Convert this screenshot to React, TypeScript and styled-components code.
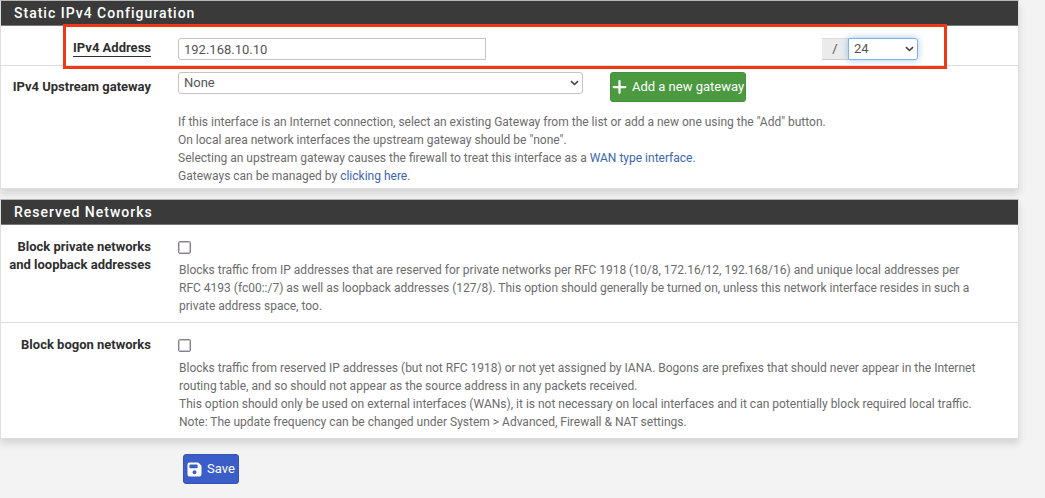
import React from "react";
import styled, { createGlobalStyle, css } from "styled-components";

const GlobalStyle = createGlobalStyle`
  *, *::before, *::after { box-sizing: border-box; }
  html { background: #f3f3f3; }
  body {
    margin: 0;
    background: #f3f3f3;
    color: #2f2f2f;
    font-family: Roboto, "Liberation Sans", sans-serif;
    font-size: 12px;
    line-height: 18px;
  }
`;

const Page = styled.form`
  margin-right: 26px;
`;

const Panel = styled.section`
  margin-bottom: 10px;
  background: #fff;
  border: 1px solid #dedede;
  border-top-color: #b5b5b5;
  box-shadow: 0 5px 7px rgba(0, 0, 0, 0.12);
`;

const PanelHeading = styled.h2`
  margin: 0;
  padding: 3px 13px;
  background: #3a3a3a;
  border-bottom: 1px solid #777;
  color: #fff;
  font-size: 14px;
  font-weight: 500;
  line-height: 18px;
  letter-spacing: 1px;
`;

const Row = styled.div<{ $pad?: string }>`
  position: relative;
  display: grid;
  grid-template-columns: 150px minmax(0, 1fr);
  column-gap: 27px;
  padding: ${(p) => p.$pad ?? "12px 8px 7px 0"};

  & + & { border-top: 1px solid #dedede; }
`;

const Label = styled.label`
  justify-self: end;
  align-self: start;
  padding-top: 1px;
  text-align: right;
  font-size: 13px;
  font-weight: 700;
`;

const RequiredMark = styled.span`
  display: block;
  margin-top: 1px;
  border-bottom: 1px solid #2f2f2f;
  line-height: 16px;
`;

const GatewayLabelText = styled.span`
  display: block;
  padding-top: 5px;
`;

const control = css`
  width: 100%;
  height: 22px;
  margin: 0;
  padding: 0 5px;
  background: #fff;
  border: 1px solid #c4c4c4;
  border-radius: 3px;
  color: #555;
  font: inherit;
  font-size: 13px;
`;

const AddressFields = styled.div`
  display: grid;
  grid-template-columns: minmax(0, 308fr) minmax(0, 336fr) 96px minmax(0, 92fr);
`;

const TextInput = styled.input`
  ${control}
  border-radius: 3px 0 0 3px;
`;

const MaskGroup = styled.div`
  grid-column: 3;
  display: grid;
  grid-template-columns: 26px 1fr;
`;

const Addon = styled.span`
  background: #ebebeb;
  border-top: 1px solid #ddd;
  border-bottom: 1px solid #ccc;
  color: #555;
  font-size: 13px;
  line-height: 20px;
  text-align: center;
`;

const SelectWrap = styled.div`
  position: relative;
  height: 22px;

  svg {
    position: absolute;
    right: 4px;
    top: 7px;
    pointer-events: none;
  }
`;

const SelectBox = styled.select<{ $active?: boolean }>`
  ${control}
  display: block;
  appearance: none;
  outline: none;
  ${(p) => p.$active && css`
    border-color: #84aee8;
    border-radius: 0 3px 3px 0;
    box-shadow: 0 0 7px rgba(102, 160, 233, 0.6);
  `}
`;

const Highlight = styled.div`
  position: absolute;
  z-index: 1;
  top: -2px;
  bottom: -4px;
  left: 62px;
  right: 71px;
  border: 3px solid #ee3917;
  pointer-events: none;
`;

const GatewayFields = styled.div`
  display: grid;
  grid-template-columns: minmax(0, 405fr) 136px minmax(0, 237fr);
  column-gap: 27px;
  margin-bottom: 11px;
`;

const Button = styled.button<{ $tone: "success" | "primary" }>`
  display: inline-flex;
  align-items: center;
  justify-content: center;
  gap: 5px;
  height: 30px;
  padding: 0 3px;
  background: ${(p) => (p.$tone === "success" ? "#4b9a40" : "#3a5dc8")};
  border: 1px solid ${(p) => (p.$tone === "success" ? "#45913b" : "#3454b8")};
  border-radius: 3px;
  color: #fff;
  font: inherit;
  font-size: 13px;
  white-space: nowrap;

  svg { flex: none; }
`;

const Help = styled.p`
  margin: 0;
  color: #6c6c6c;
`;

const Link = styled.a`
  color: #3a66b0;
  text-decoration: none;
`;

const CheckBox = styled.input`
  display: block;
  appearance: none;
  width: 13px;
  height: 13px;
  margin: 4px 0 7px;
  background: #fff;
  border: 1px solid #858091;
  border-radius: 2px;
  box-shadow: inset 0 0 0 1px #c9c6d0;
`;

const CheckHelp = styled(Help)`
  padding: 0 31px 0 1px;
`;

const Actions = styled.div`
  padding: 5px 0 14px 183px;
`;

const Chevron = () => (
  <svg width="9" height="8" viewBox="0 0 9 8" fill="none" stroke="#444" strokeWidth="1.6" aria-hidden="true">
    <path d="M1 2.2 4.5 5.5 8 2.2" />
  </svg>
);

const PlusIcon = () => (
  <svg width="15" height="16" viewBox="0 0 16 16" stroke="#fff" strokeWidth="2.4" strokeLinecap="round" aria-hidden="true">
    <path d="M8 1.8v12.4M1.8 8h12.4" />
  </svg>
);

const SaveIcon = () => (
  <svg width="15" height="16" viewBox="0 0 15 16" aria-hidden="true">
    <path
      fill="#fff"
      fillRule="evenodd"
      d="M2.2 1.5h8.6q.6 0 1 .4l2.3 2.3q.4.4.4 1v8.3q0 2-2 2H2.5q-2 0-2-2V3.5q0-2 1.7-2ZM3.1 3.6q-.7 0-.7.7v2.3q0 .7.7.7h6.8q.7 0 .7-.7V4.3q0-.7-.7-.7ZM7.5 9.3a2 2 0 1 0 0 4 2 2 0 0 0 0-4Z"
    />
  </svg>
);

export default function App() {
  return (
    <>
      <GlobalStyle />
      <Page onSubmit={(e) => e.preventDefault()}>
        <Panel>
          <PanelHeading>Static IPv4 Configuration</PanelHeading>
          <Row $pad="12px 8px 5px 0">
            <Label htmlFor="address">
              <RequiredMark>IPv4 Address</RequiredMark>
            </Label>
            <AddressFields>
              <TextInput id="address" type="text" defaultValue="192.168.10.10" />
              <MaskGroup>
                <Addon>/</Addon>
                <SelectWrap>
                  <SelectBox aria-label="Subnet mask" defaultValue="24" $active>
                    <option>24</option>
                    <option>16</option>
                  </SelectBox>
                  <Chevron />
                </SelectWrap>
              </MaskGroup>
            </AddressFields>
            <Highlight />
          </Row>
          <Row $pad="6px 8px 3px 0">
            <Label htmlFor="gateway">
              <GatewayLabelText>IPv4 Upstream gateway</GatewayLabelText>
            </Label>
            <div>
              <GatewayFields>
                <SelectWrap>
                  <SelectBox id="gateway" defaultValue="None">
                    <option>None</option>
                  </SelectBox>
                  <Chevron />
                </SelectWrap>
                <Button type="button" $tone="success">
                  <PlusIcon />
                  Add a new gateway
                </Button>
              </GatewayFields>
              <Help>
                If this interface is an Internet connection, select an existing Gateway from the list or add a new one using the "Add" button.
                <br />
                On local area network interfaces the upstream gateway should be "none".
                <br />
                Selecting an upstream gateway causes the firewall to treat this interface as a <Link href="#wan">WAN type interface</Link>.
                <br />
                Gateways can be managed by <Link href="#gateways">clicking here</Link>.
              </Help>
            </div>
          </Row>
        </Panel>

        <Panel>
          <PanelHeading>Reserved Networks</PanelHeading>
          <Row>
            <Label htmlFor="private">
              Block private networks
              <br />
              and loopback addresses
            </Label>
            <div>
              <CheckBox id="private" type="checkbox" />
              <CheckHelp>
                Blocks traffic from IP addresses that are reserved for private networks per RFC 1918 (10/8, 172.16/12, 192.168/16) and unique local addresses per RFC 4193 (fc00::/7) as well as loopback addresses (127/8). This option should generally be turned on, unless this network interface resides in such a private address space, too.
              </CheckHelp>
            </div>
          </Row>
          <Row>
            <Label htmlFor="bogon">Block bogon networks</Label>
            <div>
              <CheckBox id="bogon" type="checkbox" />
              <CheckHelp>
                Blocks traffic from reserved IP addresses (but not RFC 1918) or not yet assigned by IANA. Bogons are prefixes that should never appear in the Internet routing table, and so should not appear as the source address in any packets received.
                <br />
                This option should only be used on external interfaces (WANs), it is not necessary on local interfaces and it can potentially block required local traffic.
                <br />
                Note: The update frequency can be changed under System &gt; Advanced, Firewall &amp; NAT settings.
              </CheckHelp>
            </div>
          </Row>
        </Panel>

        <Actions>
          <Button type="submit" $tone="primary">
            <SaveIcon />
            Save
          </Button>
        </Actions>
      </Page>
    </>
  );
}
